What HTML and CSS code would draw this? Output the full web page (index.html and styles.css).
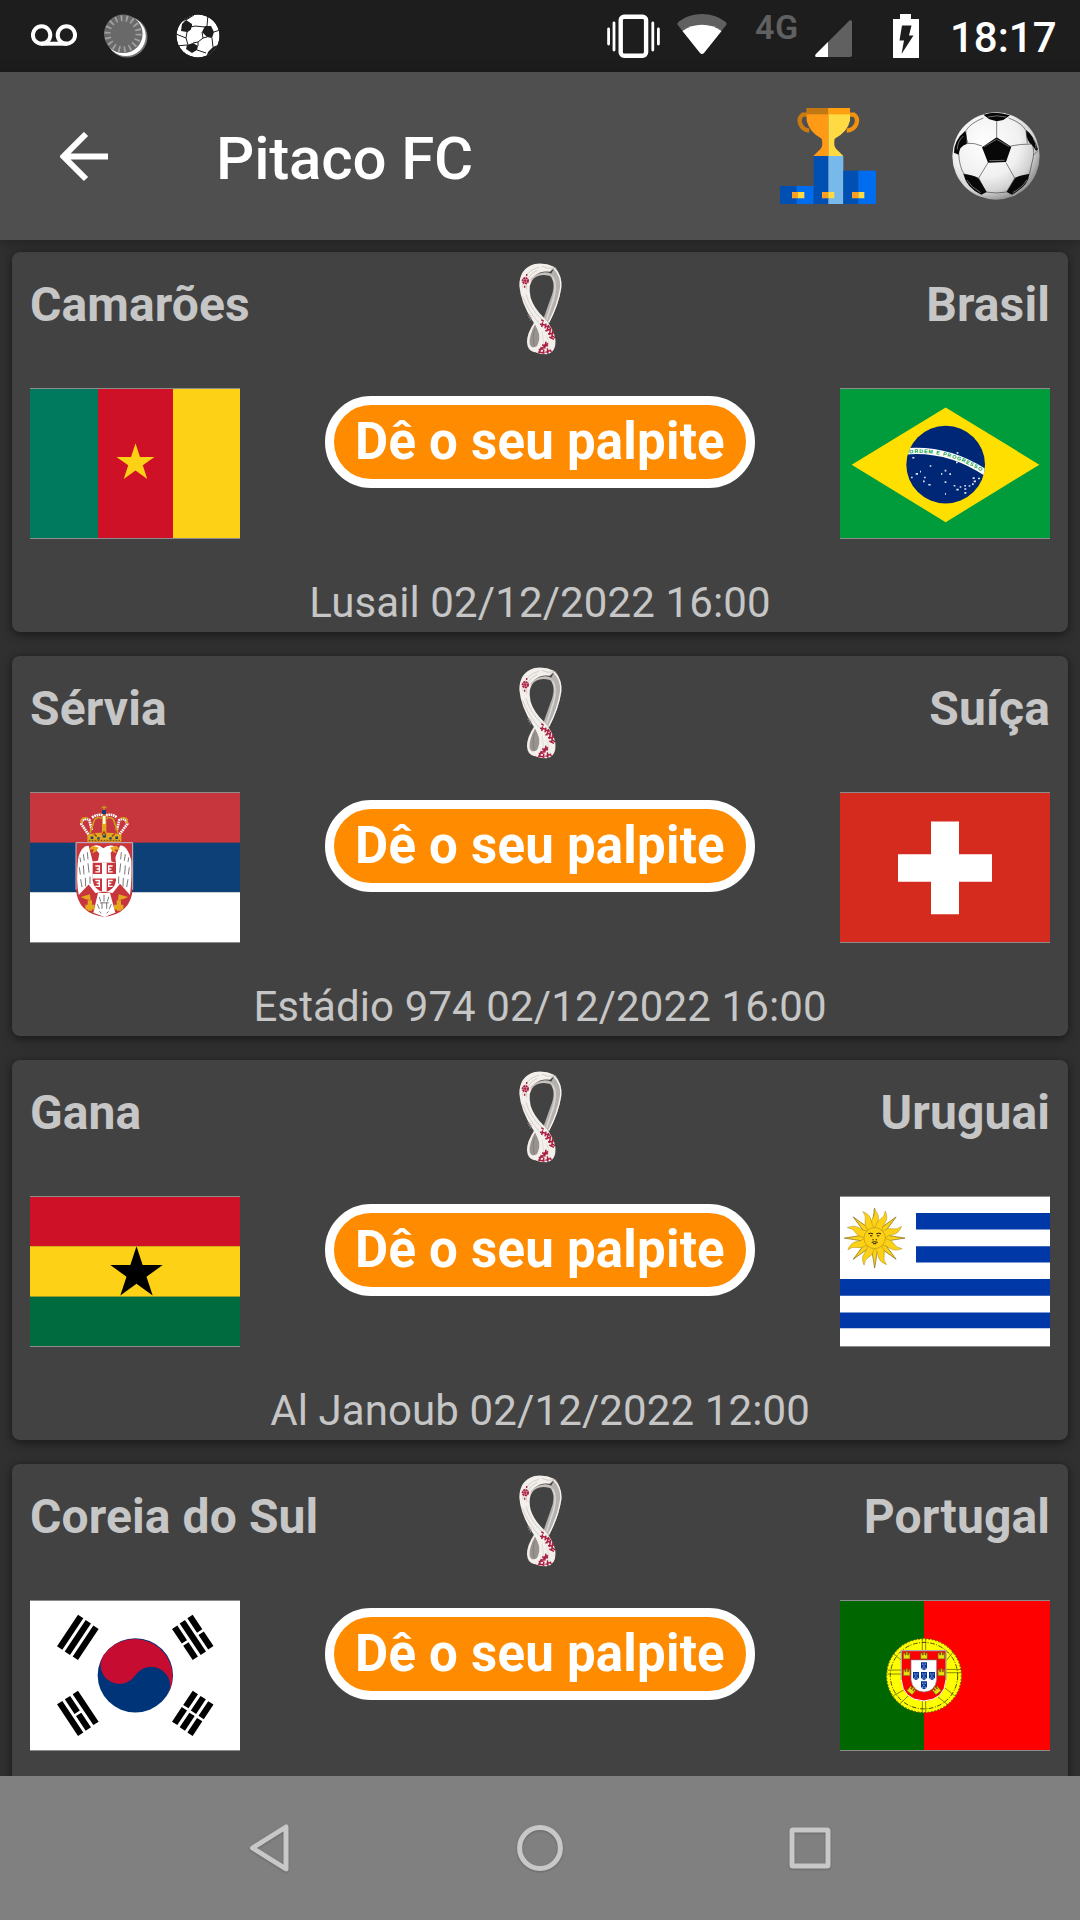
FILE: index.html
```html
<!DOCTYPE html>
<html lang="pt-BR">
<head>
<meta charset="utf-8">
<title>Pitaco FC</title>
<link rel="stylesheet" href="styles.css">
</head>
<body>
<svg class="defs" aria-hidden="true">
  <symbol id="emblem" viewBox="0 0 240 330">
    <path d="M150 62Q170 85 152 130L130 192L146 206Q176 150 184 98Q186 60 165 35Z" fill="#b5b1ae"/>
    <path d="M158 66Q172 90 160 132L140 194" fill="none" stroke="#d8d5d2" stroke-width="5"/>
    <path d="M160 38Q186 62 182 98Q174 150 146 202" fill="none" stroke="#f6f3ef" stroke-width="4"/>
    <path d="M104 200Q80 235 81 262Q82 288 104 292Q132 288 130 246Q124 220 104 200Z" fill="#f2efeb"/>
    <path d="M106 206Q86 244 89 266Q94 283 110 274Q120 260 118 232Z" fill="#98938f"/>
    <path d="M104 222Q96 244 103 274" fill="none" stroke="#77726f" stroke-width="2"/>
    <path d="M58 92Q58 40 104 27Q134 22 164 36L150 50Q122 46 104 62Q82 88 92 128Q102 160 132 188Q160 218 166 252Q170 292 140 298Q106 298 88 280Q118 286 120 254Q118 226 98 198Q62 142 58 92Z" fill="#f3f0ec"/>
    <path d="M92 72Q118 46 150 54L164 68Q140 56 116 62Q100 66 92 84Z" fill="#c5c1bd"/>
    <path d="M68 98Q68 50 118 36M80 104Q74 64 112 46M78 118Q88 158 126 194M68 124Q82 164 118 206" fill="none" stroke="#cdc8c3" stroke-width="2.5"/>
    <path d="M126 34Q144 44 162 38L150 48" fill="none" stroke="#d0cbc7" stroke-width="3"/>
    <path d="M126 230Q134 256 128 284M140 240Q150 266 146 288" fill="none" stroke="#d9d4d0" stroke-width="2"/>
    <path d="M82 180l8 2-4 6 8 2-4 7M88 178l7 10" fill="none" stroke="#a9a6a4" stroke-width="2"/>
    <g fill="none" stroke="#a91d40">
      <circle cx="76" cy="77" r="8" stroke-width="6" stroke-dasharray="6 1.5"/>
      <circle cx="76" cy="77" r="2" stroke-width="4"/>
      <path d="M80 57v6M74 92v6" stroke-width="4"/>
      <path d="M124 194l7 5M120 208l16 2M128 202l-3 14M138 206l-3 14M136 214l15 2M146 210l-6 19M136 228l18-7M152 218l-4 22M144 236l18-2M158 226l-3 25M148 246l14 7M156 242l10 7" stroke-width="4.5"/>
      <path d="M126 270l18 2M138 260l-4 21M144 265l-17 14M116 284l15-3M124 276l-6 17M114 291l20 3M132 284l-3 13M136 292l14-5M142 280l2 17M150 284l4 7" stroke-width="4.5"/>
    </g>
  </symbol>
  <symbol id="star" viewBox="-50 -50 100 100">
    <path d="M0-50L11.2-15.5H47.6L18.2 5.9L29.4 40.5L0 19.1L-29.4 40.5L-18.2 5.9L-47.6-15.5H-11.2Z"/>
  </symbol>
</svg>

<div class="screen">
  <header class="status">
    <div class="status-group">
      <svg class="voicemail" viewBox="0 0 46 22" fill="none" stroke="#fff" stroke-width="4"><circle cx="10.6" cy="11" r="8.7"/><circle cx="35.4" cy="11" r="8.7"/><path d="M10 19.7H36"/></svg>
      <svg class="spinner" viewBox="0 0 44 44"><circle cx="23" cy="23" r="20.5" fill="#777"/><circle cx="22" cy="22.2" r="19.8" fill="#fff"/><circle cx="19.3" cy="19.8" r="19.3" fill="#696969"/><circle cx="19" cy="19.8" r="15.5" fill="none" stroke="#a0a0a0" stroke-width="6" stroke-dasharray="1.8 3.6"/></svg>
      <svg class="mini-ball" viewBox="0 0 44 44"><clipPath id="mb"><circle cx="22" cy="22" r="21.5"/></clipPath><g clip-path="url(#mb)"><circle cx="22" cy="22" r="21.5" fill="#fff"/><g fill="#1d1d1d"><path d="M6 10L10 6L16 10L15 15L11 18L5 17Z"/><path d="M29 12L35 12L38 18L36 24L31 23L26 18Z"/><path d="M11 31L17 29L22 32L21 36L16 39L10 35Z"/><path d="M13 4L18 0L8 0L6 8Z"/><path d="M37 33L44 30L44 44L30 44L32 38Z"/></g><path d="M10 6L18 1M15 13L19 12L29 13M31 12L32 0M11 18L10 24L12 31M10 24L0 20M15 15L11 18M26 18L27 24L22 28L17 29M27 24L31 23M22 28L22 32M36 24L37 33M38 18L44 16M21 36L30 39M0 32L11 31M15 10L16 13" fill="none" stroke="#1d1d1d" stroke-width="1"/></g></svg>
    </div>
    <div class="status-group right">
      <svg class="vibrate" viewBox="0 0 53 44" fill="none" stroke="#fff"><rect x="13.7" y="2.7" width="25.4" height="39" rx="3.5" stroke-width="4.4"/><path d="M7 9V36M45.8 9V36M1.6 15V30M51.4 15V30" stroke-width="2.8" stroke-linecap="round"/></svg>
      <svg class="wifi" viewBox="0 0 52 42"><path d="M26 41Q27 41 28 40L51 11Q52 10 50 8Q40 0 26 0T2 8Q0 10 1 11L24 40Q25 41 26 41Z" fill="#606060"/><path d="M26 41Q27 41 28 40L46 17.5Q37 11 26 11T6 17.5L24 40Q25 41 26 41Z" fill="#fff"/></svg>
      <span class="net">4G</span>
      <svg class="signal" viewBox="0 0 37 37"><path d="M35 0Q37 0 37 2V35Q37 37 35 37H2Q-1 37 1 34L34 1Z" fill="#606060"/><path d="M13 22V37H2Q-1 37 1 34Z" fill="#fff"/></svg>
      <svg class="battery" viewBox="0 0 26 44"><path d="M7 0H18V5H26V44H0V5H7Z" fill="#fff"/><path d="M9 11.5H18.5L16 21.5H20.5L8.5 40L11 26.5H6.5Z" fill="#1d1d1d"/></svg>
      <span class="clock">18:17</span>
    </div>
  </header>

  <nav class="appbar">
    <svg class="back" viewBox="0 0 48 50"><path d="M48 24.5H4M26 2L3.5 24.5L26 47" fill="none" stroke="#fff" stroke-width="6"/></svg>
    <h1 class="title">Pitaco FC</h1>
    <svg class="podium" viewBox="30 24 288 288">
      <path d="M112 44H98Q84 54 91 72Q98 90 118 92" fill="none" stroke="#c97a10" stroke-width="13"/>
      <path d="M238 44H252Q266 54 259 72Q252 90 230 92" fill="none" stroke="#f29310" stroke-width="13"/>
      <path d="M110 24H175V168H130L152 146Q160 136 155 116Q118 96 110 62Z" fill="#ff9a16"/>
      <path d="M175 24H240V62Q232 96 194 116Q190 136 198 146L220 168H175Z" fill="#ffda43"/>
      <path d="M110 24H175V43H110Z" fill="#c17812"/><path d="M175 24H240V43H175Z" fill="#ff9f12"/>
      <path d="M30 258H80V312H30Z" fill="#0050b4"/><path d="M80 258H131V312H80Z" fill="#006df0"/>
      <path d="M131 168H175V312H131Z" fill="#0050b4"/><path d="M175 168H220V312H175Z" fill="#78b9eb"/>
      <path d="M220 212H265V312H220Z" fill="#0050b4"/><path d="M265 212H318V312H265Z" fill="#006df0"/>
      <path d="M66 276H84V295H66ZM156 276H175V295H156ZM246 276H265V295H246Z" fill="#ff9f20"/>
      <path d="M84 276H103V295H84ZM175 276H193V295H175ZM265 276H283V295H265Z" fill="#ffda43"/>
    </svg>
    <svg class="ball" viewBox="546 36 264 264">
      <defs><radialGradient id="bg" cx=".38" cy=".35" r=".66"><stop offset="0" stop-color="#fff"/><stop offset=".6" stop-color="#f0f0f0"/><stop offset=".85" stop-color="#d2d2d2"/><stop offset="1" stop-color="#9a9a9a"/></radialGradient><clipPath id="bc"><circle cx="678" cy="168" r="131"/></clipPath></defs>
      <circle cx="678" cy="168" r="131" fill="url(#bg)"/>
      <g clip-path="url(#bc)">
        <path d="M680 64V112M636 138Q612 128 594 130M722 138Q748 132 786 132M654 188L626 234M708 188L734 234M594 130Q564 130 566 160Q568 200 582 222M786 132Q796 154 786 188L778 224M582 222L626 234L648 276M778 224L734 234L710 276M648 276Q680 282 710 276M594 130Q584 110 588 92Q600 70 640 54M768 92Q758 70 716 54M768 92L772 130M786 132L802 154L792 164" fill="none" stroke="#444" stroke-width="2"/>
        <path d="M680 112L724 140L708 186L654 188L636 142ZM640 44Q678 32 720 46L700 60L680 64L658 58ZM586 92Q592 112 590 132Q568 138 566 164L552 158Q552 120 586 92ZM768 90Q790 104 804 148L798 152L786 134Q770 128 768 90ZM580 222Q614 226 626 236L650 276L634 284Q590 264 580 222ZM778 222Q744 226 734 236L710 276L726 284Q776 256 778 222Z" fill="#080808"/>
        <path d="M642 140L680 118L718 140M658 182L704 181M654 51Q680 44 708 51M562 148Q562 124 580 108M790 116Q800 130 798 146M590 240Q604 262 632 278M770 240Q756 264 728 278" fill="none" stroke="#6b6b6b" stroke-width="3"/>
      </g>
    </svg>
  </nav>

  <main class="list">
    <article class="card">
      <div class="teams"><h2>Camarões</h2><svg class="emblem"><use href="#emblem"/></svg><h2 class="away">Brasil</h2></div>
      <div class="match">
        <svg class="flag" viewBox="0 0 210 151" preserveAspectRatio="none"><path d="M0 0H68V151H0Z" fill="#007a5e"/><path d="M68 0H143V151H68Z" fill="#ce1126"/><path d="M143 0H210V151H143Z" fill="#fcd116"/><use href="#star" x="85.5" y="55" width="40" height="40" fill="#fcd116"/></svg>
        <button class="guess">Dê o seu palpite</button>
        <svg class="flag" viewBox="30 24 630 453" preserveAspectRatio="none"><path d="M30 24H660V477H30Z" fill="#009c3b"/><path d="M65 254L347 80L628 254L347 429Z" fill="#ffdf00"/>
          <clipPath id="br"><circle cx="347" cy="254" r="118"/></clipPath><circle cx="347" cy="254" r="118" fill="#002776"/>
          <g clip-path="url(#br)"><path d="M220 214Q356 200 475 284" fill="none" stroke="#fff" stroke-width="19"/></g>
          <path id="motto" d="M238 220Q352 209 462 280" fill="none"/><text class="motto" textLength="226"><textPath href="#motto">ORDEM E PROGRESSO</textPath></text>
          <path d="M247 233h6M257 282h7M243 293h5M282 293h5M279 305h5M295 315h7M299 258h5M344 272h5M333 282h4M358 283h5M344 307h5M371 318h5M379 330h7M389 322h5M403 318h5M403 328h6M403 340h6M416 319h5M426 313h5M431 305h7M428 295h6M444 296h6M378 247h5M380 218h5M345 343h3M270 275h3" stroke="#dfe4ef" stroke-width="5"/></svg>
      </div>
      <p class="venue">Lusail 02/12/2022 16:00</p>
    </article>

    <article class="card">
      <div class="teams"><h2>Sérvia</h2><svg class="emblem"><use href="#emblem"/></svg><h2 class="away">Suíça</h2></div>
      <div class="match">
        <svg class="flag" viewBox="30 36 630 453" preserveAspectRatio="none"><path d="M30 36H660V187H30Z" fill="#c6363c"/><path d="M30 187H660V338H30Z" fill="#0c4076"/><path d="M30 338H660V489H30Z" fill="#fff"/>
          <path d="M168 187H338V330Q332 402 253 413Q174 402 168 330Z" fill="#c6363c"/><path d="M168 330V187H338V330" fill="none" stroke="#c5bccb" stroke-width="3"/>
          <path d="M202 184L204 164L180 132Q178 102 214 106Q236 96 246 98L252 84L258 98Q284 96 292 106Q328 102 326 132L300 164L302 184Z" fill="#c6363c"/>
          <path d="M205 162L184 130Q188 108 208 118L216 150M299 162L322 130Q316 108 298 118L290 150M216 110Q238 98 248 104M258 104Q276 98 290 110" fill="none" stroke="#fff" stroke-width="8" stroke-dasharray="5 2"/>
          <path d="M202 184V162Q252 150 304 162V184Z" fill="#e0a91e"/><path d="M186 128Q178 108 204 112M320 128Q328 108 302 112M210 158L224 116Q236 106 246 114M294 158L280 116Q270 106 260 114" fill="none" stroke="#d09a1c" stroke-width="5"/>
          <path d="M246 104H259V158H246Z" fill="#e0a91e"/><path d="M249 106H256V130H249Z" fill="#fff"/><path d="M246 88H258V100H246Z" fill="#173e6f"/><path d="M252 74V88M245 80H260" stroke="#c8951c" stroke-width="4"/>
          <path d="M212 172h8M232 174h7M268 174h7M286 172h8M248 168h10" stroke="#173e6f" stroke-width="7"/><path d="M206 180H300" stroke="#6b4713" stroke-width="3" stroke-dasharray="5 4"/><path d="M222 160l8 8M276 168l8-8M246 164l6-10 6 10" stroke="#a03c1b" stroke-width="4" fill="none"/>
          <path d="M218 198Q234 190 250 204Q268 190 286 200L272 218L274 244L288 248L286 232L300 196Q320 190 334 240Q336 300 330 346L300 312L278 340L252 336L226 340L206 314L176 346Q168 300 174 238Q182 196 206 196L218 244L234 242L238 220Z" fill="#fff"/>
          <path d="M234 340H270L286 400L266 408L254 414L240 408L220 400Z" fill="#fff"/>
          <path d="M206 208L216 196L236 202L228 214L216 220L222 208ZM300 208L290 196L270 202L278 214L290 220L284 208ZM182 352L210 344L212 362L196 358ZM324 352L296 344L294 362L310 358ZM196 376H224V390H196ZM203 362H216V394H203ZM282 376H310V390H282ZM290 362H303V394H290Z" fill="#e5a71d"/>
          <path d="M218 248H288V302Q284 332 253 338Q222 332 218 302Z" fill="#c6363c"/><path d="M253 248V336M218 289H288" stroke="#fff" stroke-width="14"/>
          <path d="M226 258h12v18h-12M278 258h-12v18h12M226 302h12v18h-12M278 302h-12v18h12M230 267h6M274 267h-6M230 311h6M274 311h-6" fill="none" stroke="#fff" stroke-width="4"/>
          <path d="M180 232l2 14M190 222l3 20M202 216l2 22M178 262l3 22M190 256l2 28M204 250l3 28M182 298l4 24M196 294l1 26M210 290v22M326 232l-2 14M316 222l-3 20M304 216l-2 22M328 262l-3 22M316 256l-2 28M302 250l-3 28M324 298l-4 24M310 294l-1 26M296 290v22M238 352l4 14M252 346v20M266 352l-4 14M232 374l6 14M246 370v18M260 370v18M274 374l-6 14M238 396l6 6M266 396l-6 6M240 370H266" fill="none" stroke="#514b4b" stroke-width="2.3"/>
        </svg>
        <button class="guess">Dê o seu palpite</button>
        <svg class="flag" viewBox="0 0 210 151" preserveAspectRatio="none"><path d="M0 0H210V151H0Z" fill="#d52b1e"/><path d="M91 29H119V62H152V90H119V123H91V90H58V62H91Z" fill="#fff"/></svg>
      </div>
      <p class="venue">Estádio 974 02/12/2022 16:00</p>
    </article>

    <article class="card">
      <div class="teams"><h2>Gana</h2><svg class="emblem"><use href="#emblem"/></svg><h2 class="away">Uruguai</h2></div>
      <div class="match">
        <svg class="flag" viewBox="0 0 210 151" preserveAspectRatio="none"><path d="M0 0H210V50H0Z" fill="#ce1126"/><path d="M0 50H210V101H0Z" fill="#fcd116"/><path d="M0 101H210V151H0Z" fill="#006b3f"/><use href="#star" x="79" y="50" width="55" height="55" fill="#000"/></svg>
        <button class="guess">Dê o seu palpite</button>
        <svg class="flag" viewBox="30 48 630 453" preserveAspectRatio="none"><path d="M30 48H660V501H30Z" fill="#fff"/><path d="M258 97H660V147H258ZM258 198H660V247H258ZM30 297H660V348H30ZM30 399H660V447H30Z" fill="#0038a8"/>
          <g transform="translate(134 173)">
            <path id="rayset" d="M-10-28L0-91L10-28ZM28-10L91 0L28 10ZM-10 28L0 91L10 28ZM-28-10L-91 0L-28 10Z" fill="#fcd116" stroke="#7d6514" stroke-width="2"/><use href="#rayset" transform="rotate(45)"/>
            <path id="wave" d="M-10-28Q-15-48-6-60Q3-72-2-88Q15-72 11-54Q7-42 11-28Z" fill="#fcd116" stroke="#b08f18" stroke-width="1.5"/><use href="#wave" transform="rotate(22.5)"/><use href="#wave" transform="rotate(67.5)"/><use href="#wave" transform="rotate(112.5)"/><use href="#wave" transform="rotate(157.5)"/><use href="#wave" transform="rotate(202.5)"/><use href="#wave" transform="rotate(247.5)"/><use href="#wave" transform="rotate(292.5)"/><use href="#wave" transform="rotate(337.5)"/>
            <circle r="32" fill="#fcd116" stroke="#b8951a" stroke-width="2"/><path d="M-19-13Q-12-17-5-13M5-13Q12-17 19-13M-14-7H-7M7-7H14M-7 5H-3M3 5H7M-9 13Q0 9 9 13M-5 17H5" fill="none" stroke="#221b08" stroke-width="3"/>
          </g>
        </svg>
      </div>
      <p class="venue">Al Janoub 02/12/2022 12:00</p>
    </article>

    <article class="card">
      <div class="teams"><h2>Coreia do Sul</h2><svg class="emblem"><use href="#emblem"/></svg><h2 class="away">Portugal</h2></div>
      <div class="match">
        <svg class="flag" viewBox="30 30 630 453" preserveAspectRatio="none"><path d="M30 30H660V483H30Z" fill="#fff"/>
          <circle cx="346" cy="256" r="113" fill="#003478"/><path d="M251 194A113.5 113.5 0 0 1 441 318A56.7 56.7 0 0 0 346 256A56.7 56.7 0 0 1 251 194Z" fill="#c60c30"/>
          <g fill="none" stroke="#000" stroke-width="19">
            <path d="M182 77L119 173M205 93L142 189M228 110L166 204"/>
            <g transform="matrix(1 0 0 -1 0 512)"><path d="M182 77L119 173M228 110L166 204"/><path d="M205 93L142 189" stroke-dasharray="53 8"/></g>
            <g transform="matrix(-1 0 0 1 692 0)"><path d="M205 93L142 189"/><path d="M182 77L119 173M228 110L166 204" stroke-dasharray="53 8"/></g>
            <path transform="matrix(-1 0 0 -1 692 512)" d="M182 77L119 173M205 93L142 189M228 110L166 204" stroke-dasharray="53 8"/>
          </g></svg>
        <button class="guess">Dê o seu palpite</button>
        <svg class="flag" viewBox="30 30 630 453" preserveAspectRatio="none"><path d="M30 30H282V483H30Z" fill="#060"/><path d="M282 30H660V483H282Z" fill="#f00"/>
          <circle cx="282" cy="257" r="113" fill="#ff0"/>
          <g fill="none" stroke="#4d4a08" stroke-width="3"><circle cx="282" cy="257" r="112" stroke-dasharray="5 5"/><circle cx="282" cy="257" r="101" stroke-dasharray="14 4 3 5"/><path d="M277 145V182M287 145V182M277 334V369M287 334V369M172 240H214M172 252H214M348 238H392M348 248H392M190 190L214 210M372 182L348 212M190 318L226 298M374 318L342 292M208 344L244 310M354 346L322 320" stroke-width="2"/></g>
          <path d="M214 181H348V270Q344 330 281 334Q218 330 214 270Z" fill="#f00"/><path d="M214 270V181H348V270" fill="none" stroke="#aaa" stroke-width="4"/><path d="M214 270Q218 330 281 334Q344 330 348 270" fill="none" stroke="#fff" stroke-width="3"/>
          <path d="M243 209H320V270Q316 304 282 307Q247 304 243 270Z" fill="#fff" stroke="#777" stroke-width="2"/>
          <path id="quina" d="M273 216H291V232Q290 239 282 240Q274 239 273 232Z" fill="#039"/><use href="#quina" y="30"/><use href="#quina" y="58"/><use href="#quina" x="-24" y="30"/><use href="#quina" x="24" y="30"/>
          <path d="M277 222h3M284 222h3M280 228h3M277 234h3M284 234h3M277 252h3M284 252h3M280 258h3M277 264h3M284 264h3M277 280h3M284 280h3M280 286h3M277 292h3M284 292h3M253 252h3M260 252h3M256 258h3M253 264h3M260 264h3M301 252h3M308 252h3M304 258h3M301 264h3M308 264h3" stroke="#fff" stroke-width="3"/>
          <g fill="#e8df10" stroke="#6c5c08" stroke-width="2"><path id="castle" d="M220 206V188H225V194H228V185H233V194H236V188H240V206Z"/><use href="#castle" x="52"/><use href="#castle" x="104"/><use href="#castle" y="51"/><use href="#castle" x="104" y="51"/><use href="#castle" transform="translate(14 105) rotate(38 230 197)"/><use href="#castle" transform="translate(90 105) rotate(-38 230 197)"/></g></svg>
      </div>
    </article>
  </main>

  <footer class="navbar">
    <svg viewBox="0 0 48 52"><path d="M40 5V47L6.5 26Z"/></svg>
    <svg viewBox="0 0 48 52"><circle cx="24" cy="26" r="20.4"/></svg>
    <svg viewBox="0 0 48 52"><rect x="6" y="8" width="36" height="36" rx="1"/></svg>
  </footer>
</div>
</body>
</html>
```

FILE: styles.css
```css
* { box-sizing: border-box; }
body { margin: 0; background: #303030; font-family: Roboto, sans-serif; }
h1, h2, p { margin: 0; }
svg { display: block; flex: none; }
.defs { position: absolute; width: 0; height: 0; }
.screen { width: 1080px; height: 1920px; display: flex; flex-direction: column; overflow: hidden; }

.status { height: 72px; flex: none; background: #1d1d1d; color: #fff; display: flex; justify-content: space-between; padding: 0 24px 0 31px; }
.status-group { display: flex; align-items: flex-start; }
.voicemail { width: 46px; height: 22px; margin-top: 24px; }
.spinner { width: 44px; height: 44px; margin: 14px 0 0 27px; }
.mini-ball { width: 44px; height: 44px; margin: 14px 0 0 28px; }
.vibrate { width: 53px; height: 44px; margin-top: 14px; }
.wifi { width: 52px; height: 41px; margin: 14px 0 0 16px; }
.net { width: 44px; margin: 7px 0 0 27px; color: #606060; font-size: 34px; line-height: 40px; font-weight: 600; letter-spacing: .5px; }
.signal { width: 37px; height: 37px; margin: 20px 0 0 16px; }
.battery { width: 26px; height: 44px; margin: 14px 0 0 41px; }
.clock { width: 106px; margin: 13px 0 0 31px; font-size: 42px; line-height: 50px; font-weight: 500; white-space: nowrap; }

.appbar { height: 168px; flex: none; background: #4f4f4f; color: #fff; display: flex; align-items: flex-start; padding: 0 40px 0 60px; position: relative; z-index: 1; box-shadow: 0 2px 12px rgba(0,0,0,.35); }
.back { width: 48px; height: 50px; margin-top: 60px; }
.title { flex: 1; margin: 52px 0 0 108px; font-size: 60px; line-height: 70px; font-weight: 500; letter-spacing: -.15px; }
.podium { width: 96px; height: 96px; margin-top: 36px; }
.ball { width: 88px; height: 88px; margin: 40px 0 0 76px; }

.list { flex: 1; min-height: 0; overflow: hidden; display: flex; flex-direction: column; gap: 24px; padding: 12px; }
.card { height: 380px; flex: none; padding: 0 18px; background: #424242; color: #c6c6c6; border-radius: 8px; box-shadow: 0 4px 12px rgba(0,0,0,.38), 0 0 6px rgba(0,0,0,.2); }
.teams { height: 136px; display: grid; grid-template-columns: 1fr 80px 1fr; align-items: start; }
.teams h2 { margin-top: 25px; font-size: 48px; line-height: 56px; font-weight: 700; letter-spacing: .1px; white-space: nowrap; }
.teams .away { text-align: right; }
.emblem { width: 80px; height: 110px; margin-top: 3px; }
.match { height: 190px; display: flex; justify-content: space-between; align-items: flex-start; }
.flag { width: 210px; height: 151px; border: solid #8c8c8c; border-width: 1px 0; }
.guess { width: 430px; height: 92px; margin-top: 8px; padding: 0; border: 9px solid #fff; border-radius: 46px; background: #ff8c00; color: #fff; font: 700 51px/74px Roboto, sans-serif; letter-spacing: .22px; white-space: nowrap; }
.motto { font: 700 16px "Liberation Sans", sans-serif; fill: #009c3b; }
.venue { font-size: 42px; line-height: 50px; letter-spacing: .11px; text-align: center; white-space: nowrap; }

.navbar { height: 144px; flex: none; background: #808080; display: flex; justify-content: center; align-items: center; gap: 222px; }
.navbar svg { width: 48px; height: 52px; fill: none; stroke: #c8c8c8; stroke-width: 5; stroke-linejoin: round; filter: drop-shadow(0 1px 1px rgba(0,0,0,.2)); }
```
